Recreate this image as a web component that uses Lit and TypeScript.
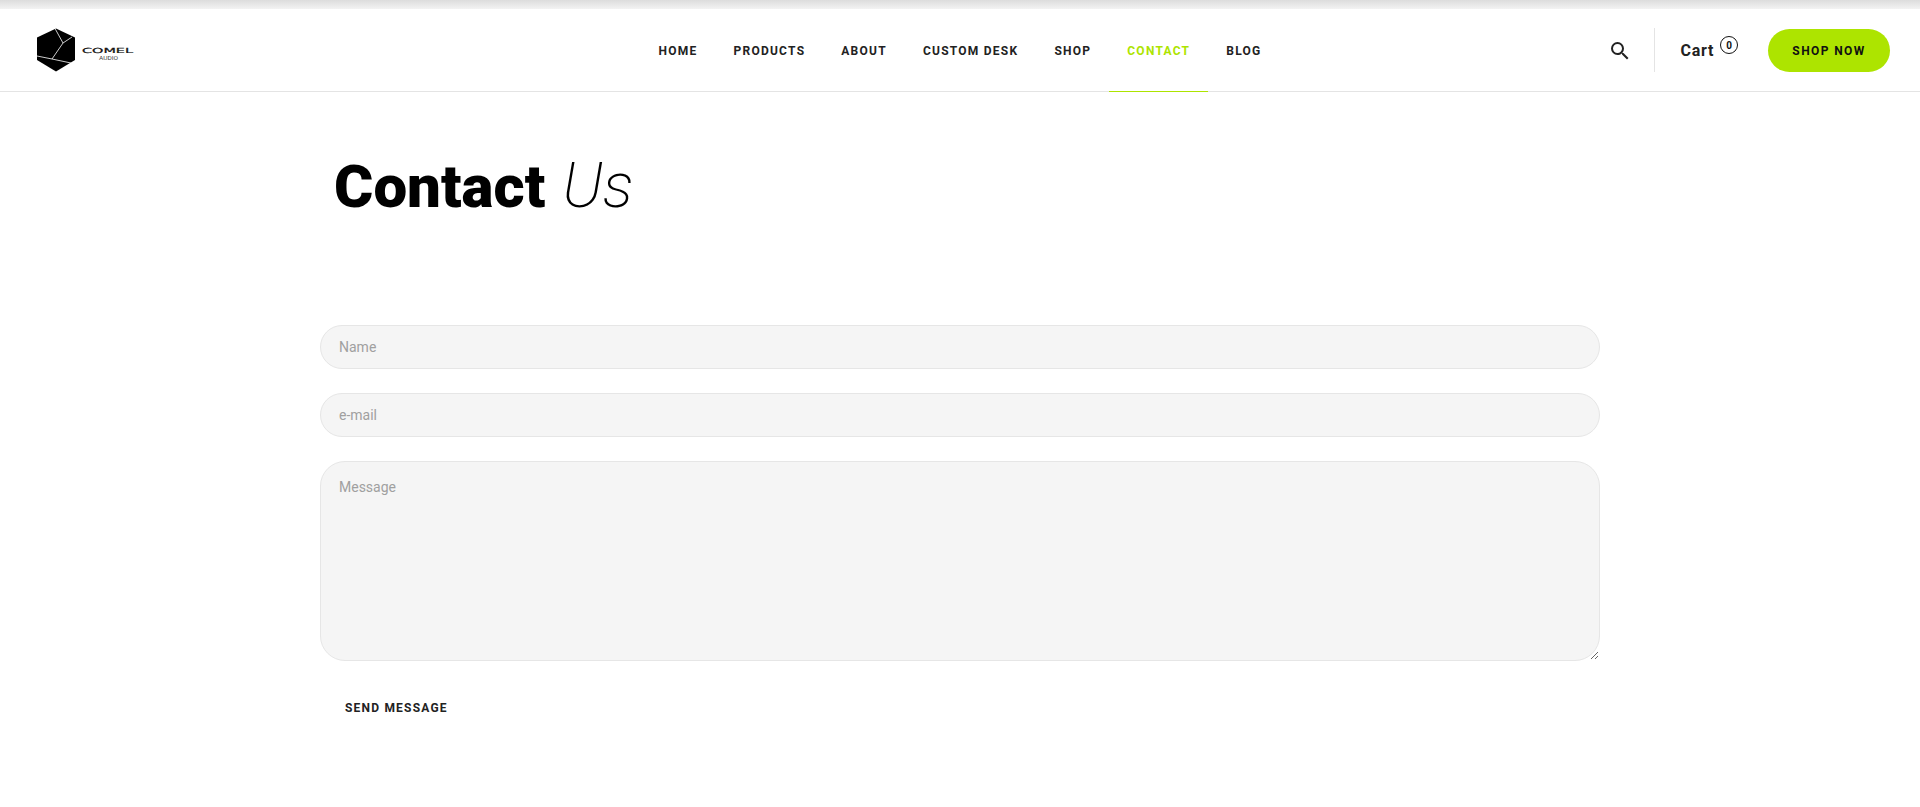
import { LitElement, html, css } from 'lit';
import { customElement } from 'lit/decorators.js';

const NAV = ['Home', 'Products', 'About', 'Custom Desk', 'Shop', 'Contact', 'Blog'];

@customElement('app-root')
export class AppRoot extends LitElement {
  static styles = css`
    :host {
      display: block;
      font-family: Roboto, 'Liberation Sans', sans-serif;
      color: #222;
      background: #fff;
    }
    .topshade {
      height: 9px;
      background: linear-gradient(#dcdcdc, #f3f3f3);
    }
    header {
      display: grid;
      grid-template-columns: 1fr auto 1fr;
      align-items: stretch;
      height: 82px;
      border-bottom: 1px solid #e4e4e4;
      box-sizing: content-box;
    }
    .logo {
      display: flex;
      align-items: center;
      padding-left: 36px;
      gap: 6px;
    }
    .wordmark {
      margin-top: 7px;
    }
    nav {
      display: flex;
    }
    nav a {
      position: relative;
      display: flex;
      align-items: center;
      padding: 1px 18px 0;
      font-size: 12px;
      font-weight: 700;
      letter-spacing: 1.25px;
      text-transform: uppercase;
      color: #222;
    }
    nav a.active {
      color: #ade400;
    }
    nav a.active::after {
      content: '';
      position: absolute;
      left: 0;
      right: 0;
      bottom: -1px;
      height: 1px;
      background: #ade400;
    }
    .tools {
      display: flex;
      align-items: center;
      justify-content: flex-end;
      padding-right: 30px;
    }
    .search {
      display: block;
      width: 24px;
      height: 24px;
      margin: 1px 22px 0 0;
    }
    .divider {
      width: 1px;
      height: 44px;
      background: #e4e4e4;
      margin-right: 26px;
    }
    .cart {
      font-size: 16px;
      font-weight: 700;
      letter-spacing: 0.7px;
    }
    .count {
      display: flex;
      align-items: center;
      justify-content: center;
      box-sizing: border-box;
      width: 18px;
      height: 18px;
      margin: 0 30px 10px 6px;
      border: 1px solid #111;
      border-radius: 50%;
      font-size: 10px;
      font-weight: 700;
      color: #111;
    }
    .shop {
      display: flex;
      align-items: center;
      justify-content: center;
      box-sizing: border-box;
      width: 122px;
      height: 43px;
      padding-top: 2px;
      border-radius: 22px;
      background: #ade400;
      font-size: 12px;
      font-weight: 700;
      letter-spacing: 1.4px;
      color: #111;
    }
    main {
      width: 1280px;
      margin: 0 auto;
    }
    h1 {
      margin: 0;
      padding: 58px 0 0 14px;
      height: 175px;
      box-sizing: content-box;
      font-size: 60px;
      line-height: 72px;
      font-weight: 900;
      color: #000;
    }
    h1 em {
      font-size: 63px;
      font-weight: 200;
      font-style: italic;
      margin-left: 2px;
    }
    form {
      display: flex;
      flex-direction: column;
      gap: 24px;
    }
    input,
    textarea {
      display: block;
      box-sizing: border-box;
      width: 100%;
      margin: 0;
      padding: 0 18px;
      background: #f5f5f5;
      border: 1px solid #e6e6e6;
      font-family: inherit;
      font-size: 14px;
      color: #222;
      outline: none;
    }
    input {
      height: 44px;
      border-radius: 22px;
    }
    textarea {
      height: 200px;
      padding-top: 16px;
      border-radius: 25px;
      line-height: 18px;
    }
    input::placeholder,
    textarea::placeholder {
      color: #a0a0a0;
      opacity: 1;
    }
    .send {
      align-self: flex-start;
      margin: 0;
      padding: 16px 25px;
      background: none;
      border: none;
      font-family: inherit;
      font-size: 12px;
      font-weight: 700;
      letter-spacing: 1.2px;
      line-height: 14px;
      color: #222;
    }
  `;

  render() {
    return html`
      <div class="topshade"></div>
      <header>
        <div class="logo">
          <svg width="40" height="44" viewBox="0 0 40 44">
            <path d="M20 0.5 L39 9.5 V32 L20 43.5 L1 32 V9.5 Z" fill="#000"></path>
            <path d="M19 0.5 L27 15 L36 9 M27 15 L16 31 M1 28 L16 31 L35 35" fill="none" stroke="#fff" stroke-width="0.8"></path>
          </svg>
          <svg class="wordmark" width="54" height="14" viewBox="0 0 54 14">
            <text x="0" y="6" font-family="DejaVu Sans" font-size="7" textLength="51" lengthAdjust="spacingAndGlyphs" fill="#111" stroke="#111" stroke-width="0.2">COMEL</text>
            <text x="17" y="13" font-family="Roboto" font-size="5" textLength="19" lengthAdjust="spacingAndGlyphs" fill="#444">AUDIO</text>
          </svg>
        </div>
        <nav>
          ${NAV.map((item) => html`<a class=${item === 'Contact' ? 'active' : ''}>${item}</a>`)}
        </nav>
        <div class="tools">
          <svg class="search" viewBox="0 0 24 24">
            <path fill="#222" d="M15.5 14h-.79l-.28-.27A6.47 6.47 0 0 0 16 9.5 6.5 6.5 0 1 0 9.5 16c1.61 0 3.09-.59 4.23-1.57l.27.28v.79l5 4.99L20.49 19l-4.99-5zm-6 0C7.01 14 5 11.99 5 9.5S7.01 5 9.5 5 14 7.01 14 9.5 11.99 14 9.5 14z"></path>
          </svg>
          <div class="divider"></div>
          <span class="cart">Cart</span>
          <span class="count">0</span>
          <a class="shop">SHOP NOW</a>
        </div>
      </header>
      <main>
        <h1>Contact <em>Us</em></h1>
        <form>
          <input type="text" placeholder="Name" />
          <input type="text" placeholder="e-mail" />
          <textarea placeholder="Message"></textarea>
          <button class="send" type="button">SEND MESSAGE</button>
        </form>
      </main>
    `;
  }
}
